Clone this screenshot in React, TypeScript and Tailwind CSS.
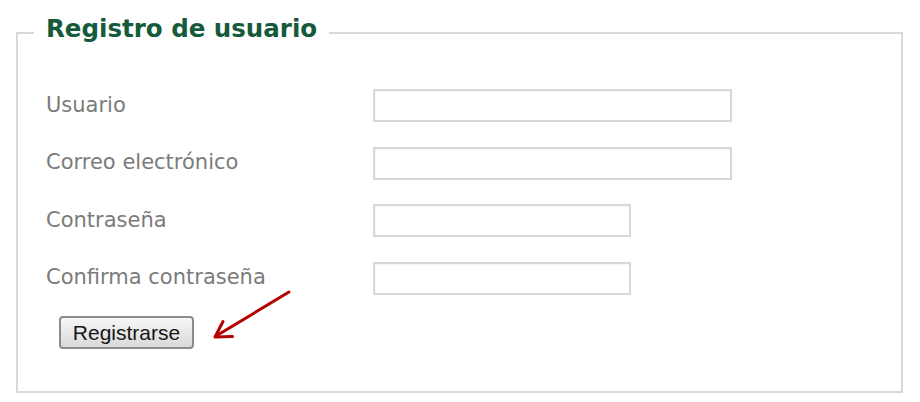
import React from "react";

const labelCls =
  "w-[327px] shrink-0 text-[21px] text-[#7b7b7b] font-['DejaVu_Sans',sans-serif]";
const inputCls =
  "h-[33px] border-2 border-[#d8d8d8] bg-white shadow-[inset_1px_1px_1px_rgba(0,0,0,0.04)] outline-none";

function Row({ label, wide }: { label: string; wide: boolean }) {
  return (
    <div className="flex h-[33px] items-center">
      <span className={labelCls}>{label}</span>
      <input
        type="text"
        className={`${inputCls} ${wide ? "w-[359px]" : "w-[258px]"}`}
        readOnly
      />
    </div>
  );
}

export default function App() {
  return (
    <div className="relative h-[402px] w-[920px] overflow-hidden bg-white">
      <fieldset className="ml-[16px] mt-[15px] w-[887px] border-2 border-[#d9d9d9] pl-4 pb-[42px]">
        <legend className="px-3 pb-[7px] text-[24.5px] font-bold leading-[28px] text-[#145a3b] font-['DejaVu_Sans',sans-serif]">
          Registro de usuario
        </legend>
        <div className="flex flex-col gap-[24.5px] pl-3 pt-[39px]">
          <Row label="Usuario" wide />
          <Row label="Correo electrónico" wide />
          <Row label="Contraseña" wide={false} />
          <Row label="Confirma contraseña" wide={false} />
        </div>
        <div className="pl-[25px] pt-[21.5px]">
          <button
            type="button"
            className="h-[33px] w-[135px] rounded-[4px] border-2 border-[#8c8c8c] bg-gradient-to-b from-[#f7f7f7] to-[#d9d9d9] text-[21px] leading-none text-[#161616] font-['Liberation_Sans',Arial,sans-serif]"
          >
            Registrarse
          </button>
        </div>
      </fieldset>
      <svg
        className="absolute left-[205px] top-[282px]"
        width="95"
        height="65"
        viewBox="205 282 95 65"
      >
        <g
          stroke="#b30000"
          strokeWidth="3"
          strokeLinecap="round"
          strokeLinejoin="round"
          fill="none"
        >
          <line x1="289" y1="292" x2="216" y2="336" />
          <polyline points="223,321.5 215,337 232.5,336.5" />
        </g>
      </svg>
    </div>
  );
}
